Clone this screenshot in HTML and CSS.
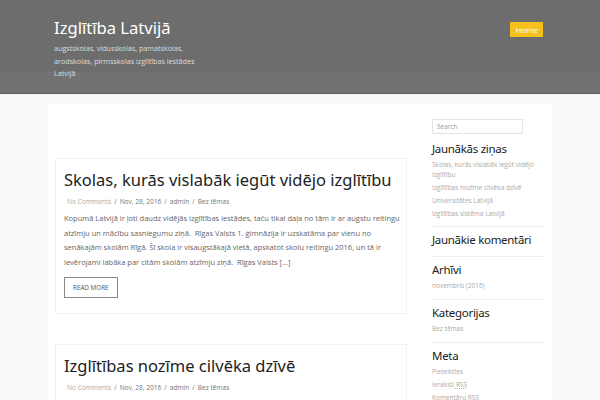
FILE: index.html
```html
<!DOCTYPE html>
<html lang="lv">
<head>
<meta charset="utf-8">
<title>Izglītība Latvijā</title>
<link rel="stylesheet" href="styles.css">
</head>
<body>
<header class="site-header">
  <div class="header-inner">
    <div class="branding">
      <div class="site-title">Izglītība Latvijā</div>
      <div class="site-desc">augstskolas, vidusskolas, pamatskolas, arodskolas, pirmsskolas izglītības iestādes Latvijā</div>
    </div>
    <nav class="nav"><a class="nav-home">Home</a></nav>
  </div>
</header>
<div class="page">
  <main class="content">
    <article class="post">
      <h2 class="post-title">Skolas, kurās vislabāk iegūt vidējo izglītību</h2>
      <div class="meta"><span class="meta-c">No Comments</span><span class="sep">/</span>Nov, 28, 2016<span class="sep">/</span>admin<span class="sep">/</span>Bez tēmas</div>
      <p class="excerpt">Kopumā Latvijā ir ļoti daudz vidējās izglītības iestādes, taču tikai daļa no tām ir ar augstu reitingu atzīmju un mācību sasniegumu ziņā.&nbsp; Rīgas Valsts 1. ģimnāzija ir uzskatāma par vienu no senākajām skolām Rīgā. Šī skola ir visaugstākajā vietā, apskatot skolu reitingu 2016, un tā ir ievērojami labāka par citām skolām atzīmju ziņā.&nbsp; Rīgas Valsts […]</p>
      <a class="more">READ MORE</a>
    </article>
    <article class="post">
      <h2 class="post-title">Izglītības nozīme cilvēka dzīvē</h2>
      <div class="meta"><span class="meta-c">No Comments</span><span class="sep">/</span>Nov, 28, 2016<span class="sep">/</span>admin<span class="sep">/</span>Bez tēmas</div>
    </article>
  </main>
  <aside class="sidebar">
    <div class="search">Search</div>
    <section class="widget first">
      <h3 class="w-title">Jaunākās ziņas</h3>
      <ul class="w-list">
        <li>Skolas, kurās vislabāk iegūt vidējo izglītību</li>
        <li>Izglītības nozīme cilvēka dzīvē</li>
        <li>Universitātes Latvijā</li>
        <li>Izglītības sistēma Latvijā</li>
      </ul>
    </section>
    <section class="widget">
      <h3 class="w-title">Jaunākie komentāri</h3>
    </section>
    <section class="widget">
      <h3 class="w-title">Arhīvi</h3>
      <ul class="w-list"><li>novembris (2016)</li></ul>
    </section>
    <section class="widget">
      <h3 class="w-title">Kategorijas</h3>
      <ul class="w-list"><li>Bez tēmas</li></ul>
    </section>
    <section class="widget last">
      <h3 class="w-title">Meta</h3>
      <ul class="w-list">
        <li>Pieteikties</li>
        <li>Ieraksti <abbr>RSS</abbr></li>
        <li>Komentāru <abbr>RSS</abbr></li>
      </ul>
    </section>
  </aside>
</div>
</body>
</html>
```
FILE: styles.css
```css
html, body { margin: 0; padding: 0; }
body {
  background: #f9f9f9;
  font-family: "Open Sans", "Noto Sans", sans-serif;
  color: #666;
  overflow: hidden;
}
.site-header {
  background: linear-gradient(#6d6d6d 0, #6d6d6d 72px, #727272 72px);
  height: 93px;
  border-bottom: 1px solid #5c5c5c;
}
.header-inner {
  width: 504px;
  margin: 0 auto;
  padding: 14px 6px 0;
  box-sizing: border-box;
  display: flex;
  justify-content: space-between;
  align-items: flex-start;
}
.branding { width: 150px; }
.site-title {
  font-family: "Noto Sans", sans-serif;
  color: #fff;
  font-size: 16.6px;
  line-height: 28px;
}
.site-desc {
  color: #ddd;
  font-size: 7.2px;
  line-height: 12.6px;
  margin-top: 0;
}
.nav { padding-top: 8px; padding-right: 3px; }
.nav-home {
  display: block;
  background: #f5c11c;
  color: #fff;
  font-size: 8px;
  line-height: 15px;
  padding: 0 5px;
}
.page {
  width: 504px;
  margin: 10px auto 0;
  background: #fff;
  display: flex;
  gap: 25px;
  padding: 0 7px;
  box-sizing: border-box;
  min-height: 300px;
}
.content { width: 352px; flex: none; padding-top: 54px; }
.post {
  border: 1px solid #f1f1f1;
  padding: 8px 4px 15px 8px;
  margin-bottom: 30px;
}
.post-title {
  font-family: "Noto Sans", sans-serif;
  font-weight: normal;
  color: #222;
  font-size: 16.5px;
  line-height: 26px;
  margin: 0;
}
.meta {
  font-size: 6.6px;
  line-height: 14px;
  color: #777;
  margin-top: 2px;
  padding-left: 3px;
}
.meta-c { color: #aaa; }
.sep { margin: 0 3px; }
.excerpt {
  font-size: 7.5px;
  line-height: 14.7px;
  color: #666;
  margin: 2px 0 7px;
}
.more {
  display: block;
  width: max-content;
  border: 1px solid #888;
  font-size: 6.3px;
  color: #555;
  line-height: 19px;
  padding: 0 8px;
}
.sidebar { width: 113px; flex: none; padding-top: 15px; }
.search {
  width: 91px;
  height: 15px;
  border: 1px solid #e4e4e4;
  box-sizing: border-box;
  font-size: 6.5px;
  color: #999;
  line-height: 13px;
  padding-left: 4px;
}
.widget {
  border-bottom: 1px solid #eee;
  padding: 5px 0 6.5px;
}
.widget.first { padding-top: 7px; padding-bottom: 5px; }
.widget.last { border-bottom: none; }
.w-title {
  font-family: "Noto Sans", sans-serif;
  font-weight: normal;
  color: #222;
  font-size: 11.5px;
  letter-spacing: -0.3px;
  line-height: 16px;
  margin: 0 0 1.5px;
}
.w-list {
  list-style: none;
  margin: 0;
  padding: 0;
}
.w-list li {
  font-size: 6.5px;
  line-height: 10px;
  color: #aaa;
  padding: 1.5px 0;
}
abbr { text-decoration: underline dotted; }
```
